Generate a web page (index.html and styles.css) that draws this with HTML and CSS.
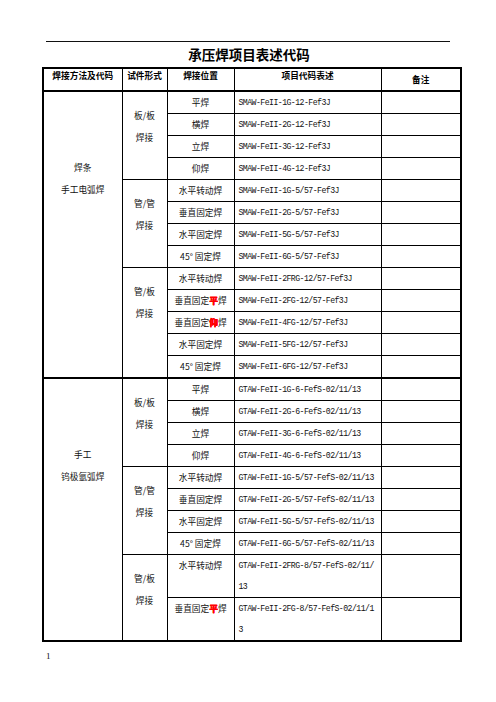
FILE: index.html
```html
<!DOCTYPE html>
<html lang="zh-CN">
<head>
<meta charset="utf-8">
<title>承压焊项目表述代码</title>
<link rel="stylesheet" href="styles.css">
</head>
<body>
<div class="page">
  <div class="rule"></div>
  <h1 class="title">承压焊项目表述代码</h1>
  <table class="grid">
    <colgroup>
      <col class="c1"><col class="c2"><col class="c3"><col class="c4"><col class="c5">
    </colgroup>
    <thead>
      <tr class="head">
        <th class="top">焊接方法及代码</th>
        <th class="top">试件形式</th>
        <th class="top">焊接位置</th>
        <th class="top">项目代码表述</th>
        <th class="mid">备注</th>
      </tr>
    </thead>
    <tbody class="sec">
      <tr>
        <td class="method" rowspan="13">焊条<br>手工电弧焊</td>
        <td class="form" rowspan="4">板/板<br>焊接</td>
        <td class="pos">平焊</td><td class="code">SMAW-FeII-1G-12-Fef3J</td><td></td>
      </tr>
      <tr><td class="pos">横焊</td><td class="code">SMAW-FeII-2G-12-Fef3J</td><td></td></tr>
      <tr><td class="pos">立焊</td><td class="code">SMAW-FeII-3G-12-Fef3J</td><td></td></tr>
      <tr><td class="pos">仰焊</td><td class="code">SMAW-FeII-4G-12-Fef3J</td><td></td></tr>
      <tr>
        <td class="form" rowspan="4">管/管<br>焊接</td>
        <td class="pos">水平转动焊</td><td class="code">SMAW-FeII-1G-5/57-Fef3J</td><td></td>
      </tr>
      <tr><td class="pos">垂直固定焊</td><td class="code">SMAW-FeII-2G-5/57-Fef3J</td><td></td></tr>
      <tr><td class="pos">水平固定焊</td><td class="code">SMAW-FeII-5G-5/57-Fef3J</td><td></td></tr>
      <tr><td class="pos">45° 固定焊</td><td class="code">SMAW-FeII-6G-5/57-Fef3J</td><td></td></tr>
      <tr>
        <td class="form" rowspan="5">管/板<br>焊接</td>
        <td class="pos">水平转动焊</td><td class="code">SMAW-FeII-2FRG-12/57-Fef3J</td><td></td>
      </tr>
      <tr><td class="pos">垂直固定<span class="red">平</span>焊</td><td class="code">SMAW-FeII-2FG-12/57-Fef3J</td><td></td></tr>
      <tr><td class="pos">垂直固定<span class="red">仰</span>焊</td><td class="code">SMAW-FeII-4FG-12/57-Fef3J</td><td></td></tr>
      <tr><td class="pos">水平固定焊</td><td class="code">SMAW-FeII-5FG-12/57-Fef3J</td><td></td></tr>
      <tr><td class="pos">45° 固定焊</td><td class="code">SMAW-FeII-6FG-12/57-Fef3J</td><td></td></tr>
    </tbody>
    <tbody class="sec">
      <tr>
        <td class="method" rowspan="10">手工<br>钨极氩弧焊</td>
        <td class="form" rowspan="4">板/板<br>焊接</td>
        <td class="pos">平焊</td><td class="code">GTAW-FeII-1G-6-FefS-02/11/13</td><td></td>
      </tr>
      <tr><td class="pos">横焊</td><td class="code">GTAW-FeII-2G-6-FefS-02/11/13</td><td></td></tr>
      <tr><td class="pos">立焊</td><td class="code">GTAW-FeII-3G-6-FefS-02/11/13</td><td></td></tr>
      <tr><td class="pos">仰焊</td><td class="code">GTAW-FeII-4G-6-FefS-02/11/13</td><td></td></tr>
      <tr>
        <td class="form" rowspan="4">管/管<br>焊接</td>
        <td class="pos">水平转动焊</td><td class="code">GTAW-FeII-1G-5/57-FefS-02/11/13</td><td></td>
      </tr>
      <tr><td class="pos">垂直固定焊</td><td class="code">GTAW-FeII-2G-5/57-FefS-02/11/13</td><td></td></tr>
      <tr><td class="pos">水平固定焊</td><td class="code">GTAW-FeII-5G-5/57-FefS-02/11/13</td><td></td></tr>
      <tr><td class="pos">45° 固定焊</td><td class="code">GTAW-FeII-6G-5/57-FefS-02/11/13</td><td></td></tr>
      <tr class="tall">
        <td class="form" rowspan="2">管/板<br>焊接</td>
        <td class="pos">水平转动焊</td><td class="code">GTAW-FeII-2FRG-8/57-FefS-02/11/<br>13</td><td></td>
      </tr>
      <tr class="tall"><td class="pos">垂直固定<span class="red">平</span>焊</td><td class="code">GTAW-FeII-2FG-8/57-FefS-02/11/1<br>3</td><td></td></tr>
    </tbody>
  </table>
  <div class="pageno">1</div>
</div>
</body>
</html>
```

FILE: styles.css
```css
html, body {
  margin: 0;
  padding: 0;
  background: #fff;
}

.page {
  width: 496px;
  height: 702px;
  padding-top: 41px;
  box-sizing: border-box;
  font-family: "Noto Sans CJK SC", "Noto Sans", sans-serif;
  color: #111;
}

.rule {
  margin-left: 46px;
  width: 404px;
  border-top: 1px solid #111;
}

.title {
  margin: 0;
  height: 25px;
  line-height: 25px;
  text-align: center;
  font-size: 13.5px;
  font-weight: bold;
  color: #000;
  padding-left: 2px;
}

.grid {
  margin-left: 42px;
  width: 418px;
  table-layout: fixed;
  border-collapse: collapse;
  border: 2px solid #000;
  font-size: 8.7px;
}

.c1 { width: 79px; }
.c2 { width: 45px; }
.c3 { width: 67px; }
.c4 { width: 147px; }
.c5 { width: 80px; }

.grid th,
.grid td {
  border: 1px solid #000;
  padding: 0;
  height: 21px;
  text-align: center;
  vertical-align: middle;
  line-height: 12px;
  white-space: nowrap;
}

.grid th {
  font-weight: bold;
  color: #000;
  height: 20px;
}

.grid th.top {
  vertical-align: top;
  padding-top: 1px;
}

.grid .sec {
  border-top: 2px solid #000;
}

.grid td.method {
  vertical-align: top;
  padding-top: 65px;
  line-height: 22px;
}

.grid td.form {
  vertical-align: top;
  padding-top: 13px;
  line-height: 21.5px;
}

.grid td.code {
  text-align: left;
  padding-left: 4px;
  font-family: "Liberation Mono", "DejaVu Sans Mono", monospace;
  font-size: 8.2px;
  letter-spacing: -0.55px;
}

.grid tr.tall td {
  height: 41px;
}

.grid tr.tall td.pos,
.grid tr.tall td.code {
  vertical-align: top;
  line-height: 21px;
}

.red {
  color: #f00;
  font-weight: 900;
  text-shadow: 0.4px 0 0 #f00, 0 0.4px 0 #f00;
}

.pageno {
  margin-top: 9px;
  margin-left: 46px;
  font-family: "Liberation Serif", serif;
  font-size: 9px;
  color: #111;
}
```
